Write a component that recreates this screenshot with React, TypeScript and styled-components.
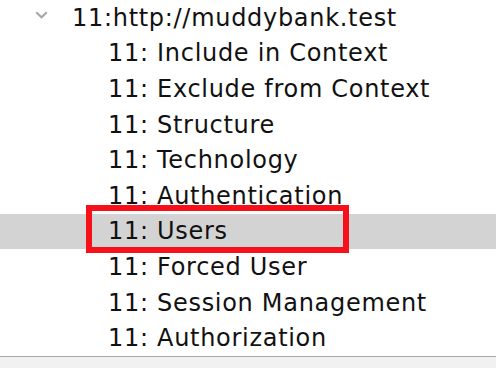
import styled, { createGlobalStyle } from 'styled-components';

const GlobalStyle = createGlobalStyle`
  html, body {
    margin: 0;
    padding: 0;
    background: #ffffff;
  }
  body {
    width: 496px;
    height: 368px;
    overflow: hidden;
  }
`;

const rowHeight = '35.6px';

const Panel = styled.div`
  position: relative;
  width: 496px;
  height: 368px;
  display: flex;
  flex-direction: column;
  font-family: 'DejaVu Sans', 'Liberation Sans', sans-serif;
`;

const Tree = styled.ul`
  list-style: none;
  margin: 0;
  padding: 0;
  height: 356px;
  overflow: hidden;
`;

const Row = styled.li<{ $selected?: boolean; $depth: number }>`
  display: flex;
  align-items: center;
  height: ${rowHeight};
  padding-left: ${(p) => (p.$depth === 0 ? '35px' : '108px')};
  background: ${(p) => (p.$selected ? '#d3d3d3' : 'transparent')};
  font-size: 24px;
  letter-spacing: 0.7px;
  color: #111111;
  white-space: nowrap;
`;

const Toggle = styled.svg`
  width: 13px;
  height: 8px;
  margin-right: 24px;
  margin-top: -5px;
  flex-shrink: 0;
`;

const Footer = styled.div`
  flex: 1;
  border-top: 1px solid #a9a9a9;
  background: #f1f1f1;
`;

const Highlight = styled.div`
  position: absolute;
  left: 86px;
  top: 205px;
  width: 263px;
  height: 48px;
  box-sizing: border-box;
  border: 6px solid #f5101a;
  pointer-events: none;
`;

const children = [
  'Include in Context',
  'Exclude from Context',
  'Structure',
  'Technology',
  'Authentication',
  'Users',
  'Forced User',
  'Session Management',
  'Authorization',
];

function App() {
  return (
    <>
      <GlobalStyle />
      <Panel>
        <Tree>
          <Row $depth={0}>
            <Toggle viewBox="0 0 13 8">
              <path d="M1.2 1.2 L6.5 6.3 L11.8 1.2" fill="none" stroke="#a6a6a6" strokeWidth="2" />
            </Toggle>
            11:http://muddybank.test
          </Row>
          {children.map((name) => (
            <Row key={name} $depth={1} $selected={name === 'Users'}>
              11: {name}
            </Row>
          ))}
        </Tree>
        <Footer />
        <Highlight />
      </Panel>
    </>
  );
}

export default App;
